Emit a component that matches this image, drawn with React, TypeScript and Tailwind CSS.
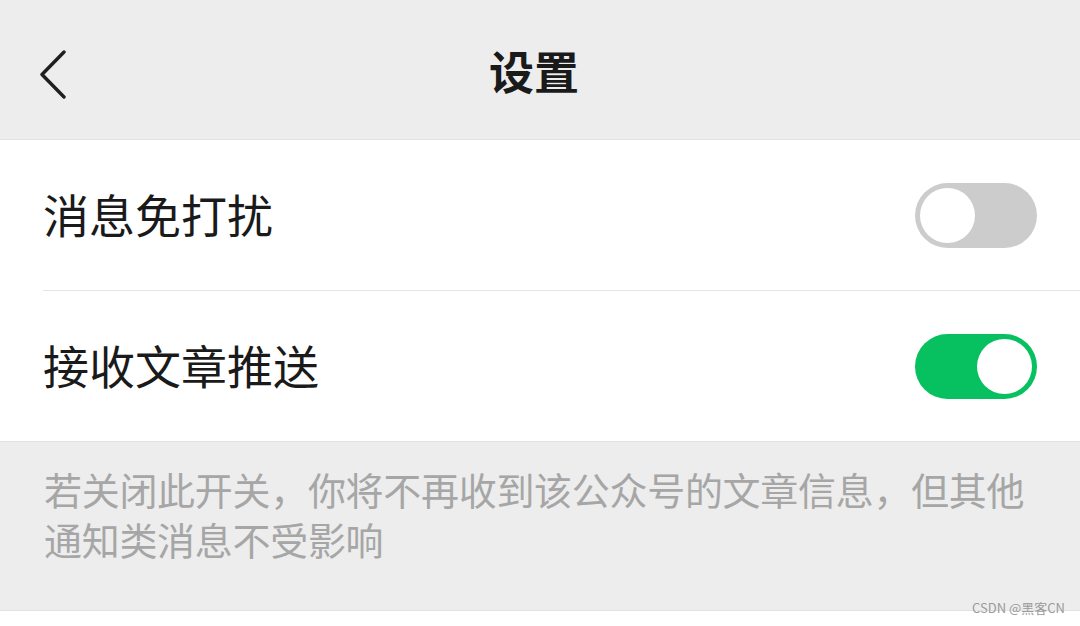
import React from "react";

const font = { fontFamily: '"Noto Sans CJK SC", "Noto Sans", sans-serif' };

const Toggle = ({ on }: { on: boolean }) => (
  <div
    className={`w-[122px] h-[65px] rounded-full flex items-center px-[5px] ${
      on ? "bg-[#07c160] justify-end" : "bg-[#cccccc] justify-start"
    }`}
  >
    <div className="w-[55px] h-[55px] rounded-full bg-white" />
  </div>
);

export default function App() {
  return (
    <div className="relative w-[1080px] h-[626px] bg-white overflow-hidden" style={font}>
      <div className="relative h-[140px] bg-[#ededed] border-b border-[#e2e2e2] flex items-center justify-center">
        <svg className="absolute left-[38px] top-[50px]" width="30" height="50" viewBox="0 0 30 50">
          <path d="M26 2 L4 24.5 L26 47" fill="none" stroke="#1f1f1f" strokeWidth="3.4" strokeLinecap="round" strokeLinejoin="round" />
        </svg>
        <span className="text-[45px] font-bold text-[#1a1a1a] leading-none mr-[12px] mt-[2px]">设置</span>
      </div>

      <div className="h-[150px] flex items-center justify-between pl-[43px] pr-[43px]">
        <span className="text-[46px] text-[#1a1a1a] leading-none -mt-[4px]">消息免打扰</span>
        <Toggle on={false} />
      </div>
      <div className="ml-[43px] h-px bg-[#e5e5e5]" />
      <div className="h-[150px] flex items-center justify-between pl-[43px] pr-[43px]">
        <span className="text-[46px] text-[#1a1a1a] leading-none -mt-[4px]">接收文章推送</span>
        <Toggle on={true} />
      </div>

      <div className="h-[170px] bg-[#ededed] border-t border-b border-[#e2e2e2] pt-[22px] pl-[44px] pr-[42px]">
        <p className="text-[38px] leading-[50px] text-[#a6a6a6] tracking-[-0.3px]">
          若关闭此开关，你将不再收到该公众号的文章信息，但其他通知类消息不受影响
        </p>
      </div>

      <span className="absolute right-[15px] top-[601px] text-[13px] leading-none text-[#9a9a9a]">
        CSDN @黑客CN
      </span>
    </div>
  );
}
